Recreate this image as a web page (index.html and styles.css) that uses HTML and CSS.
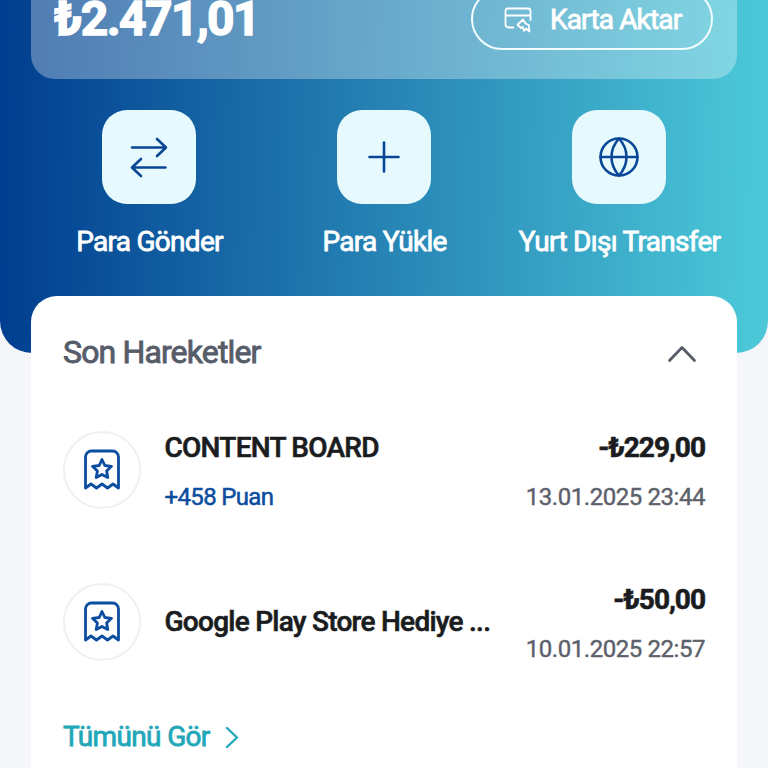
FILE: index.html
```
<!DOCTYPE html>
<html lang="tr">
<head>
<meta charset="utf-8">
<title>Cüzdan</title>
<link rel="stylesheet" href="styles.css">
</head>
<body>
<svg class="defs" width="0" height="0">
  <symbol id="receipt" viewBox="0 0 40 44">
    <path d="M3.500 40V9a6 6 0 0 1 6-6h21a6 6 0 0 1 6 6v31l-5.500-4-5.500 4-5.500-4-5.500 4L9 36z"/>
    <path d="M20 11.500l2.800 6 6.700.8-4.900 4.700 1.200 6.600L20 26.500l-5.800 3.100 1.200-6.600-4.900-4.700 6.700-.8z"/>
  </symbol>
</svg>
<header class="hero">
  <section class="balance">
    <strong class="balance-sum">₺2.471,01</strong>
    <button class="transfer">
      <svg width="28" height="26" viewBox="0 0 28 26">
        <path d="M9.500 20.500H4.500a3 3 0 0 1-3-3V4a2.500 2.500 0 0 1 2.500-2.500H24A2.500 2.500 0 0 1 26.500 4V13M1.500 8.500h25"/>
        <path d="M19 12.500L13.500 18l3.500 3 1.500-1.200 1.500 4 2-2.300 3.500 3-.800-6.500L21.500 16.500z"/>
      </svg>
      <span>Karta Aktar</span>
    </button>
  </section>
  <nav class="actions">
    <a class="action">
      <span class="tile"><svg width="40" height="44" viewBox="0 0 40 44"><path d="M3 12.500h33.500M28 4l9 8.500-9 8.500M36.500 32.500H3M12 24l-9 8.500 9 8.500"/></svg></span>
      <span class="action-name">Para Gönder</span>
    </a>
    <a class="action">
      <span class="tile"><svg width="40" height="40" viewBox="0 0 40 40"><path d="M20 5.500v29M5.500 20h29"/></svg></span>
      <span class="action-name">Para Yükle</span>
    </a>
    <a class="action">
      <span class="tile"><svg width="44" height="44" viewBox="0 0 44 44"><circle cx="22" cy="22" r="18.500"/><path d="M3.500 22h37M22 3.500c-10 11-10 26 0 37M22 3.500c10 11 10 26 0 37"/></svg></span>
      <span class="action-name">Yurt Dışı Transfer</span>
    </a>
  </nav>
</header>
<main class="card">
  <div class="card-head">
    <h2>Son Hareketler</h2>
    <svg width="32" height="20" viewBox="0 0 32 20"><path d="M3.500 16.500L16 3.500l12.500 13"/></svg>
  </div>
  <article class="row">
    <span class="badge"><svg width="40" height="44"><use href="#receipt"/></svg></span>
    <div class="info">
      <span class="name">CONTENT BOARD</span>
      <span class="points">+458 Puan</span>
    </div>
    <div class="side">
      <span class="amount">-₺229,00</span>
      <time>13.01.2025 23:44</time>
    </div>
  </article>
  <article class="row">
    <span class="badge"><svg width="40" height="44"><use href="#receipt"/></svg></span>
    <div class="info">
      <span class="name">Google Play Store Hediye ...</span>
    </div>
    <div class="side">
      <span class="amount">-₺50,00</span>
      <time>10.01.2025 22:57</time>
    </div>
  </article>
  <a class="all"><span>Tümünü Gör</span><svg width="16" height="24" viewBox="0 0 16 24"><path d="M3 3l10 9.500L3 22"/></svg></a>
</main>
</body>
</html>
```

FILE: styles.css
```
* { box-sizing: border-box; }
body {
  margin: 0;
  height: 768px;
  overflow: hidden;
  background: #f5f6f9;
  font-family: Roboto, "Liberation Sans", sans-serif;
}
svg { display: block; flex: none; fill: none; stroke: currentColor; stroke-linecap: round; stroke-linejoin: round; }
.defs { display: none; }
.hero {
  height: 353px;
  border-radius: 0 0 32px 32px;
  background: linear-gradient(91deg, #003d8f, #4bc7d8 98%);
  color: #fff;
}
.balance {
  display: flex;
  justify-content: space-between;
  align-items: flex-start;
  height: 79px;
  margin: 0 31px;
  padding: 0 24px 0 23px;
  border-radius: 0 0 24px 24px;
  background: rgba(255, 255, 255, 0.31);
}
.balance-sum { font-size: 48px; line-height: 56px; margin-top: -9px; letter-spacing: -1.6px; font-weight: 700; -webkit-text-stroke: 1.4px; }
.transfer {
  display: flex;
  align-items: center;
  gap: 18px;
  width: 242px;
  height: 62px;
  margin-top: -12px;
  padding: 2px 0 0 31px;
  border: 2px solid #f2fdff;
  border-radius: 31px;
  background: none;
  color: #fff;
  font: 400 28px/32px Roboto, sans-serif;
  letter-spacing: -0.85px;
  -webkit-text-stroke: 0.8px;
}
.transfer svg { stroke-width: 1.8; }
.actions {
  display: grid;
  grid-template-columns: repeat(3, 235px);
  justify-content: center;
  padding-top: 31px;
}
.action { display: flex; flex-direction: column; align-items: center; gap: 22px; }
.tile {
  display: grid;
  place-items: center;
  width: 94px;
  height: 94px;
  border-radius: 25px;
  background: #e6fafe;
  color: #094796;
}
.tile svg { stroke-width: 2.6; }
.action-name { padding-left: 1px; font-size: 28px; line-height: 32px; font-weight: 400; -webkit-text-stroke: 0.8px; letter-spacing: -0.72px; white-space: nowrap; }
.card {
  position: relative;
  height: 472px;
  margin: -57px 31px 0;
  padding: 0 32px;
  border-radius: 26px 26px 0 0;
  background: #fff;
}
.card-head { display: flex; justify-content: space-between; align-items: center; height: 116px; padding-right: 7px; color: #575c69; }
.card-head svg { stroke-width: 2.8; }
h2 { margin: 0; font-size: 32px; line-height: 38px; font-weight: 400; -webkit-text-stroke: 0.9px; letter-spacing: -0.86px; padding-bottom: 4px; }
.row { display: flex; align-items: center; height: 116px; margin-bottom: 36px; color: #1a1c20; }
.badge {
  display: grid;
  place-items: center;
  width: 78px;
  height: 78px;
  margin-right: 23.5px;
  border: 2px solid #f0f0f2;
  border-radius: 50%;
  color: #0b4d9f;
}
.badge svg { stroke-width: 2.8; }
.info, .side { display: flex; flex-direction: column; gap: 18px; white-space: nowrap; }
.side { margin-left: auto; align-items: flex-end; padding-top: 3px; }
.info:has(.points) { padding-top: 3px; }
.name, .amount { font-size: 28px; line-height: 32px; font-weight: 500; -webkit-text-stroke: 0.6px; letter-spacing: -0.74px; }
.amount { font-weight: 700; letter-spacing: -1px; }
.points, time { font-size: 24px; line-height: 30px; letter-spacing: -0.44px; }
.points { color: #0b4d9f; letter-spacing: -0.65px; -webkit-text-stroke: 0.5px; }
time { color: #5c606b; -webkit-text-stroke: 0.4px; }
.all { display: flex; align-items: center; gap: 14px; height: 36px; padding-top: 6px; color: #22a7b9; font-size: 28px; line-height: 32px; font-weight: 400; letter-spacing: -0.65px; }
.all span { -webkit-text-stroke: 0.8px; }
.all svg { stroke-width: 2.4; }
```
